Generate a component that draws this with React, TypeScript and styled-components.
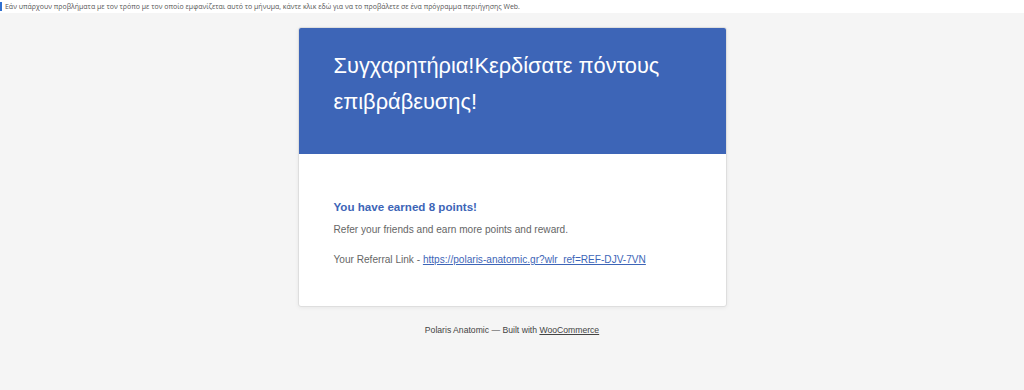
import React from "react";
import styled, { createGlobalStyle } from "styled-components";

const Global = createGlobalStyle`
  html, body { margin: 0; padding: 0; background: #f5f5f5; }
  body { font-family: "Liberation Sans", Arial, sans-serif; }
`;

const Notice = styled.div`
  height: 13px;
  background: #ffffff;
  display: flex;
  align-items: center;
  font-family: "Open Sans", "Noto Sans", sans-serif;
  font-size: 6.97px;
  color: #555;
  white-space: nowrap;
  overflow: hidden;
`;

const NoticeMark = styled.span`
  width: 2px;
  height: 9px;
  background: #2f6fd0;
  margin-right: 3px;
`;

const Page = styled.div`
  display: flex;
  flex-direction: column;
  align-items: center;
  padding-top: 14px;
`;

const Card = styled.div`
  width: 427px;
  background: #fff;
  border: 1px solid #dedede;
  border-radius: 3px;
  box-shadow: 0 1px 4px rgba(0, 0, 0, 0.06);
  overflow: hidden;
`;

const Header = styled.div`
  background: #3d65b7;
  padding: 20px 35px 34px;
  height: 72px;
`;

const Title = styled.h1`
  margin: 0;
  color: #fff;
  font-family: "Liberation Sans", Arial, sans-serif;
  font-weight: 400;
  font-size: 21.8px;
  line-height: 36px;
`;

const Body = styled.div`
  padding: 44px 35px 32px;
  height: 76px;
`;

const Earned = styled.h2`
  margin: 0 0 6px;
  color: #3d65b7;
  font-size: 11.6px;
  font-weight: 700;
  line-height: 18px;
`;

const Text = styled.p<{ $gap?: number }>`
  margin: 0 0 ${(p) => p.$gap ?? 0}px;
  color: #666;
  font-size: 10.1px;
  line-height: 16px;
`;

const Link = styled.a`
  color: #3d65b7;
  text-decoration: underline;
`;

const Footer = styled.div`
  margin-top: 16px;
  font-size: 8.65px;
  color: #444;
  line-height: 14px;
`;

const FooterLink = styled.a`
  color: #444;
  text-decoration: underline;
`;

export default function App() {
  return (
    <>
      <Global />
      <Notice>
        <NoticeMark />
        Εάν υπάρχουν προβλήματα με τον τρόπο με τον οποίο εμφανίζεται αυτό το μήνυμα, κάντε κλικ εδώ για να το προβάλετε σε ένα πρόγραμμα περιήγησης Web.
      </Notice>
      <Page>
        <Card>
          <Header>
            <Title>Συγχαρητήρια!Κερδίσατε πόντους επιβράβευσης!</Title>
          </Header>
          <Body>
            <Earned>You have earned 8 points!</Earned>
            <Text $gap={14}>Refer your friends and earn more points and reward.</Text>
            <Text>
              Your Referral Link - <Link href="#">https://polaris-anatomic.gr?wlr_ref=REF-DJV-7VN</Link>
            </Text>
          </Body>
        </Card>
        <Footer>
          Polaris Anatomic — Built with <FooterLink href="#">WooCommerce</FooterLink>
        </Footer>
      </Page>
    </>
  );
}
